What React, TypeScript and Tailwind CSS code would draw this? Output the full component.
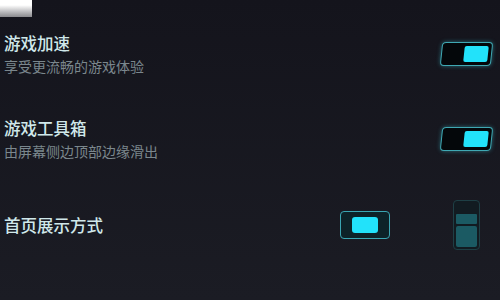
import React from 'react';

const font = { fontFamily: '"Noto Sans CJK SC", "Noto Sans", sans-serif' };

function SkewToggle() {
  return (
    <div className="-skew-x-6 w-[51px] h-[24px] rounded-[4px] border-[1.5px] border-[#3fa8b3] bg-[#04070a] shadow-[0_0_4px_rgba(60,190,205,0.5)] flex items-center justify-end p-[3px]">
      <div className="w-[24px] h-full rounded-[2px] bg-[#22e2fa]" />
    </div>
  );
}

function SettingRow({ title, desc }: { title: string; desc: string }) {
  return (
    <div className="flex items-center justify-between pl-[4px] pr-[8px]">
      <div className="flex flex-col">
        <span className="text-[16.5px] leading-[20px] font-medium text-[#d0e8ea]">{title}</span>
        <span className="text-[14px] leading-[18px] mt-[4px] text-[#7b878d]">{desc}</span>
      </div>
      <SkewToggle />
    </div>
  );
}

export default function App() {
  return (
    <div
      className="w-[500px] h-[300px] overflow-hidden bg-gradient-to-b from-[#14141c] to-[#1b1c24] flex flex-col"
      style={font}
    >
      <div className="w-[32px] h-[17px] bg-gradient-to-b from-white from-30% to-[#8a8a8e]" />

      <div className="mt-[16px]">
        <SettingRow title="游戏加速" desc="享受更流畅的游戏体验" />
      </div>
      <div className="mt-[43px]">
        <SettingRow title="游戏工具箱" desc="由屏幕侧边顶部边缘滑出" />
      </div>

      <div className="mt-[40px] flex items-center pl-[4px]">
        <span className="text-[16.5px] leading-[20px] font-medium text-[#d0e8ea]">首页展示方式</span>
        <div className="ml-auto flex items-center gap-[63px] pr-[20px]">
          <div className="w-[50px] h-[28px] rounded-[4px] border-[1.5px] border-[#3aa6b2] bg-[#0d2328] flex items-center justify-center">
            <div className="w-[26px] h-[16px] rounded-[3px] bg-[#22e2fa]" />
          </div>
          <div className="w-[27px] h-[50px] rounded-[4px] border-[1.5px] border-[#1e3f45] bg-[#121b21] flex flex-col gap-[2px] px-[2px] pt-[13px] pb-[2px]">
            <div className="h-[10px] rounded-[1px] bg-[#1b5a63]" />
            <div className="flex-1 rounded-[2px] bg-[#1b5a63]" />
          </div>
        </div>
      </div>
    </div>
  );
}
